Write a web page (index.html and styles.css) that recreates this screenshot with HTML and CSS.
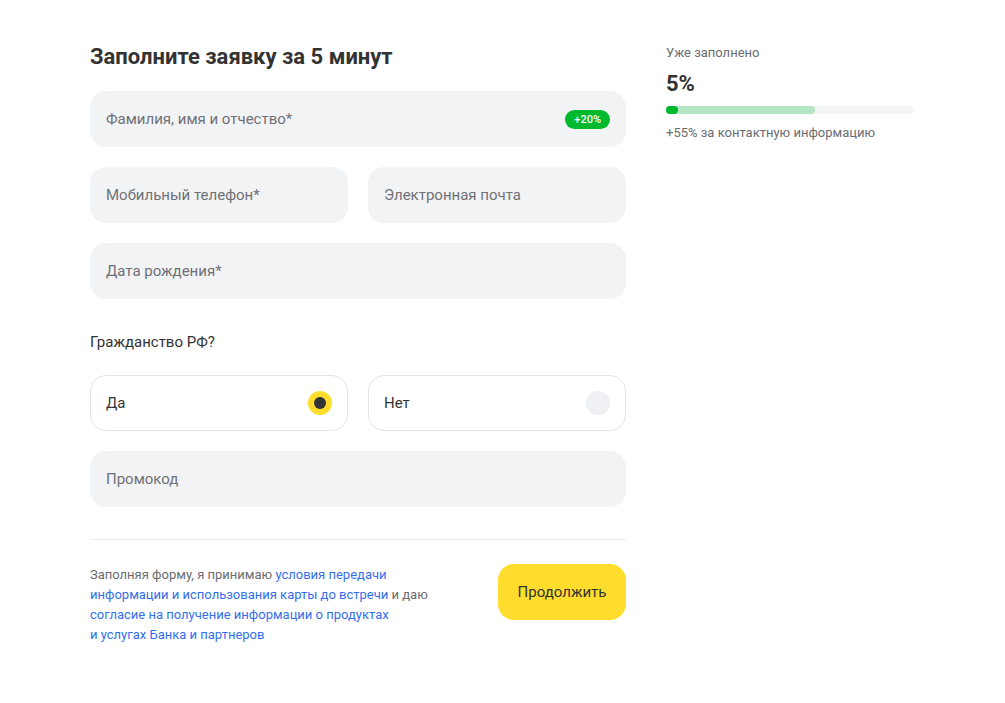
FILE: index.html
```html
<!DOCTYPE html>
<html lang="ru">
<head>
<meta charset="utf-8">
<link rel="stylesheet" href="styles.css">
</head>
<body>
<div class="page">
  <main class="form">
    <h1 class="title">Заполните заявку за 5 минут</h1>
    <div class="field field-wide">
      <span class="placeholder">Фамилия, имя и отчество*</span>
      <span class="badge">+20%</span>
    </div>
    <div class="row">
      <div class="field"><span class="placeholder">Мобильный телефон*</span></div>
      <div class="field"><span class="placeholder">Электронная почта</span></div>
    </div>
    <div class="field"><span class="placeholder">Дата рождения*</span></div>
    <div class="question">Гражданство РФ?</div>
    <div class="row">
      <div class="radio">
        <span class="radio-label">Да</span>
        <span class="dot dot-on"></span>
      </div>
      <div class="radio">
        <span class="radio-label">Нет</span>
        <span class="dot"></span>
      </div>
    </div>
    <div class="field"><span class="placeholder">Промокод</span></div>
    <hr class="divider">
    <div class="footer">
      <p class="legal">Заполняя форму, я принимаю <a href="#">условия передачи</a><br><a href="#">информации и использования карты до встречи</a> и даю<br><a href="#">согласие на получение информации о продуктах</a><br><a href="#">и услугах Банка и партнеров</a></p>
      <button class="submit">Продолжить</button>
    </div>
  </main>
  <aside class="side">
    <div class="side-label">Уже заполнено</div>
    <div class="side-value">5%</div>
    <div class="bar">
      <div class="bar-next" style="width: 60%"></div>
      <div class="bar-fill" style="width: 12px"></div>
    </div>
    <div class="side-hint">+55% за контактную информацию</div>
  </aside>
</div>
</body>
</html>
```

FILE: styles.css
```css
* { box-sizing: border-box; }
html, body { margin: 0; padding: 0; background: #fff; }
body {
  font-family: Roboto, "Liberation Sans", Arial, sans-serif;
  color: #333333;
}
.page {
  display: flex;
  gap: 40px;
  padding: 43px 0 0 90px;
}
.form {
  width: 536px;
  display: flex;
  flex-direction: column;
  gap: 20px;
}
.title {
  margin: 0;
  font-size: 22px;
  line-height: 28px;
  font-weight: 700;
  color: #333333;
}
.row {
  display: grid;
  grid-template-columns: 1fr 1fr;
  gap: 20px;
}
.field {
  height: 56px;
  background: #f2f3f5;
  border-radius: 16px;
  display: flex;
  align-items: center;
  justify-content: space-between;
  padding: 0 16px;
}
.placeholder {
  font-size: 15px;
  color: #6f7176;
}
.badge {
  background: #00b92d;
  color: #fff;
  font-size: 11px;
  font-weight: 500;
  height: 19px;
  line-height: 19px;
  padding: 0 9px;
  border-radius: 10px;
}
.question {
  margin-top: 13px;
  font-size: 15px;
  line-height: 20px;
  color: #333;
  margin-bottom: 3px;
}
.radio {
  height: 56px;
  border: 1px solid #e3e4e7;
  border-radius: 16px;
  background: #fff;
  display: flex;
  align-items: center;
  justify-content: space-between;
  padding: 0 15px;
}
.radio-label {
  font-size: 15px;
  color: #333;
}
.dot {
  width: 24px;
  height: 24px;
  border-radius: 50%;
  background: #eef0f3;
}
.dot-on {
  background: #ffdd2d;
  display: flex;
  align-items: center;
  justify-content: center;
}
.dot-on::after {
  content: "";
  width: 12px;
  height: 12px;
  border-radius: 50%;
  background: #333333;
}
.divider {
  margin: 12px 0 4px;
  border: 0;
  border-top: 1px solid #ececee;
}
.footer {
  display: flex;
  justify-content: space-between;
  align-items: flex-start;
}
.legal {
  margin: 1px 0 0;
  font-size: 13px;
  line-height: 20px;
  color: #6a6c70;
  white-space: nowrap;
}
.legal a {
  color: #336fee;
  text-decoration: none;
}
.submit {
  width: 128px;
  height: 56px;
  border: 0;
  border-radius: 16px;
  background: #ffdd2d;
  color: #333;
  font-family: inherit;
  font-size: 15px;
  padding: 0;
}
.side {
  width: 248px;
}
.side-label {
  font-size: 13px;
  line-height: 20px;
  color: #6a6c70;
}
.side-value {
  margin-top: 7px;
  font-size: 22px;
  line-height: 28px;
  font-weight: 700;
  color: #333;
}
.bar {
  margin-top: 8px;
  height: 8px;
  border-radius: 4px;
  background: #f3f4f5;
  position: relative;
}
.bar-next {
  height: 8px;
  border-radius: 4px;
  background: #b5e6c3;
}
.bar-fill {
  position: absolute;
  left: 0;
  top: 0;
  height: 8px;
  border-radius: 4px;
  background: #00b92d;
}
.side-hint {
  margin-top: 9px;
  font-size: 13px;
  line-height: 20px;
  color: #6a6c70;
}
```
